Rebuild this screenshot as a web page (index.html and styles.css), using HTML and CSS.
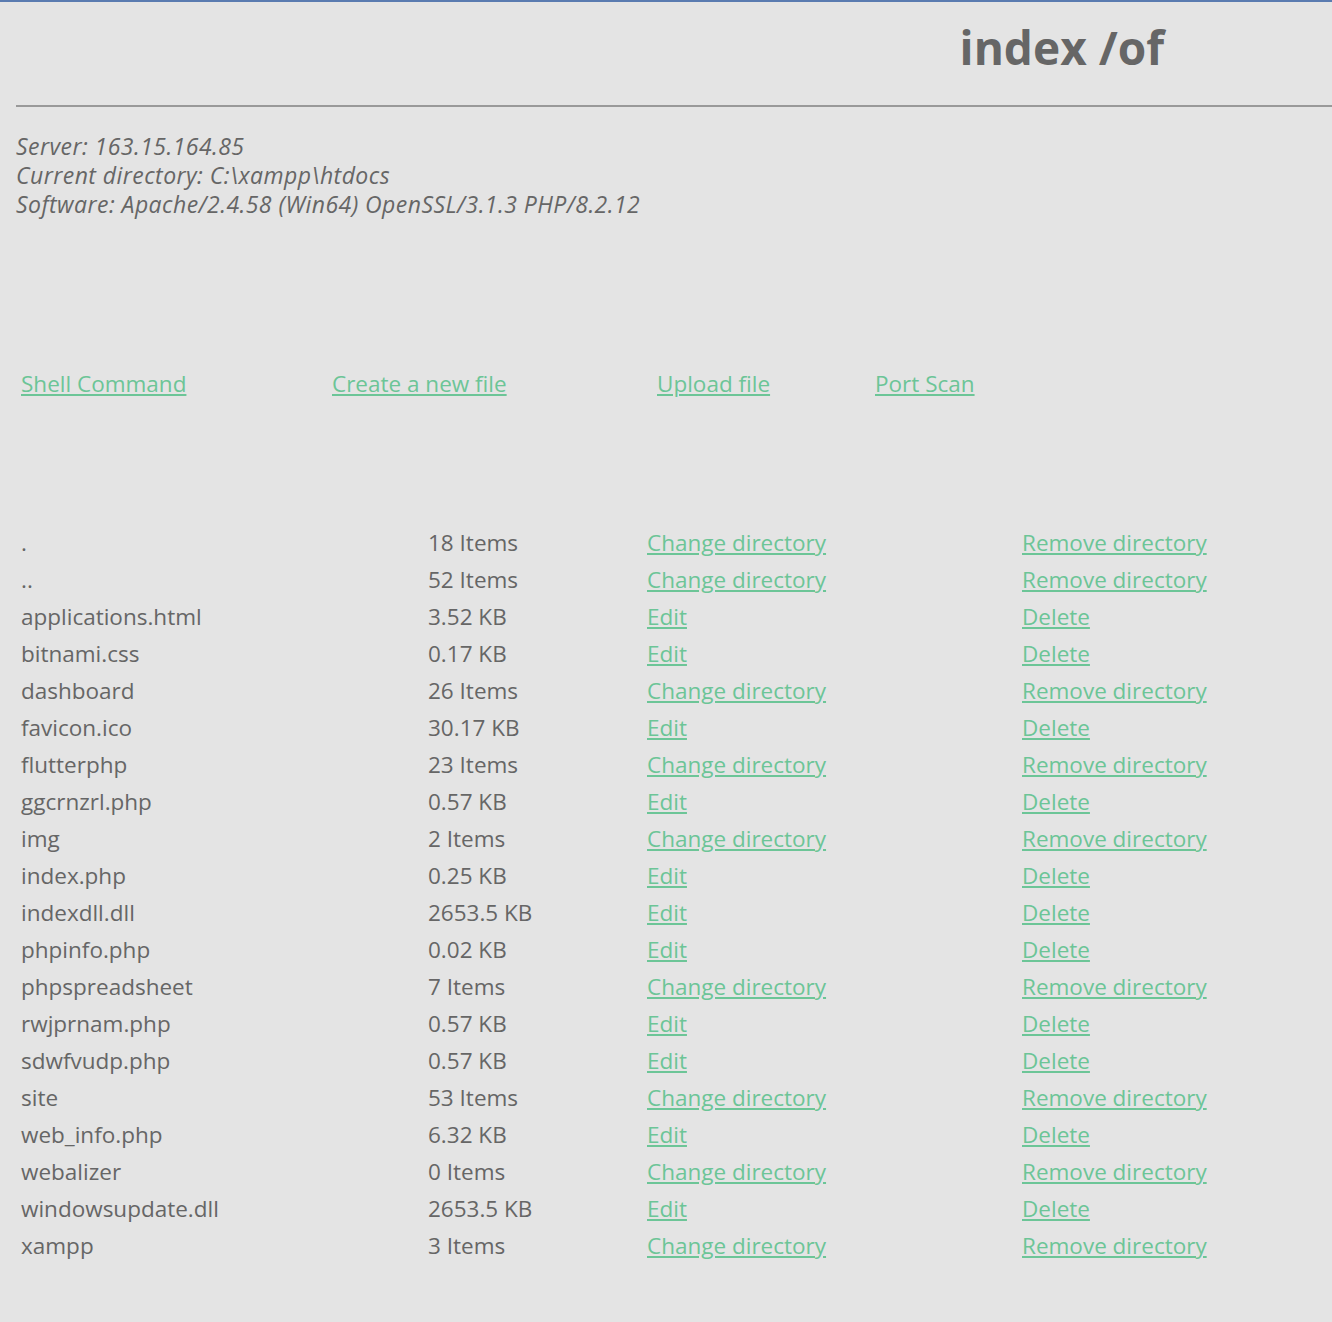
FILE: index.html
```html
<!DOCTYPE html>
<html lang="en">
<head>
    <meta charset="UTF-8">
    <title>index /of</title>
    <link rel="stylesheet" href="styles.css">
</head>
<body>
    <header class="top">
        <h1>index /of</h1>
    </header>
    <hr class="rule">
    <div class="info">
        <p>Server: 163.15.164.85</p>
        <p>Current directory: C:\xampp\htdocs</p>
        <p>Software: Apache/2.4.58 (Win64) OpenSSL/3.1.3 PHP/8.2.12</p>
    </div>
    <nav class="tools">
        <a href="#">Shell Command</a>
        <a href="#">Create a new file</a>
        <a href="#">Upload file</a>
        <a href="#">Port Scan</a>
    </nav>
    <div class="files">
        <span>.</span><span>18 Items</span><a href="#">Change directory</a><a href="#">Remove directory</a>
        <span>..</span><span>52 Items</span><a href="#">Change directory</a><a href="#">Remove directory</a>
        <span>applications.html</span><span>3.52 KB</span><a href="#">Edit</a><a href="#">Delete</a>
        <span>bitnami.css</span><span>0.17 KB</span><a href="#">Edit</a><a href="#">Delete</a>
        <span>dashboard</span><span>26 Items</span><a href="#">Change directory</a><a href="#">Remove directory</a>
        <span>favicon.ico</span><span>30.17 KB</span><a href="#">Edit</a><a href="#">Delete</a>
        <span>flutterphp</span><span>23 Items</span><a href="#">Change directory</a><a href="#">Remove directory</a>
        <span>ggcrnzrl.php</span><span>0.57 KB</span><a href="#">Edit</a><a href="#">Delete</a>
        <span>img</span><span>2 Items</span><a href="#">Change directory</a><a href="#">Remove directory</a>
        <span>index.php</span><span>0.25 KB</span><a href="#">Edit</a><a href="#">Delete</a>
        <span>indexdll.dll</span><span>2653.5 KB</span><a href="#">Edit</a><a href="#">Delete</a>
        <span>phpinfo.php</span><span>0.02 KB</span><a href="#">Edit</a><a href="#">Delete</a>
        <span>phpspreadsheet</span><span>7 Items</span><a href="#">Change directory</a><a href="#">Remove directory</a>
        <span>rwjprnam.php</span><span>0.57 KB</span><a href="#">Edit</a><a href="#">Delete</a>
        <span>sdwfvudp.php</span><span>0.57 KB</span><a href="#">Edit</a><a href="#">Delete</a>
        <span>site</span><span>53 Items</span><a href="#">Change directory</a><a href="#">Remove directory</a>
        <span>web_info.php</span><span>6.32 KB</span><a href="#">Edit</a><a href="#">Delete</a>
        <span>webalizer</span><span>0 Items</span><a href="#">Change directory</a><a href="#">Remove directory</a>
        <span>windowsupdate.dll</span><span>2653.5 KB</span><a href="#">Edit</a><a href="#">Delete</a>
        <span>xampp</span><span>3 Items</span><a href="#">Change directory</a><a href="#">Remove directory</a>
    </div>
</body>
</html>
```

FILE: styles.css
```css
body {
    margin: 0;
    border-top: 2px solid #5a7bb0;
    background: #e4e4e4;
    color: #666;
    font-family: "Open Sans", "Noto Sans", sans-serif;
    font-size: 22.5px;
    min-height: 1320px;
}
.top {
    display: flex;
    justify-content: flex-end;
    padding-right: 168px;
}
.top h1 {
    margin: 15px 0 0;
    font-size: 46px;
    font-weight: bold;
    line-height: 60px;
    color: #666;
}
.rule {
    margin: 28px 0 0 16px;
    border: 0;
    border-top: 2px solid #999;
    height: 0;
}
.info {
    padding: 25px 0 0 16px;
    font-style: italic;
    font-size: 23px;
    letter-spacing: 0.45px;
}
.info p {
    margin: 0;
    line-height: 29px;
}
.tools {
    display: grid;
    grid-template-columns: 311px 325px 218px auto;
    padding: 150px 0 0 21px;
    line-height: 30px;
}
a {
    color: #6cc597;
    text-decoration: underline;
}
.files {
    display: grid;
    grid-template-columns: 407px 219px 375px auto;
    padding: 125px 0 0 21px;
    line-height: 37px;
}
```
